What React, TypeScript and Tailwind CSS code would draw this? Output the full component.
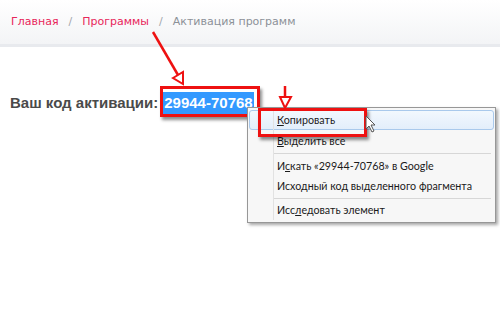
import React from 'react';

const menuFont = { fontFamily: 'Lato, "Liberation Sans", sans-serif' };

function MenuItem({ children, active }: { children: React.ReactNode; active?: boolean }) {
  return (
    <div
      className={
        'h-[20px] flex items-center pl-[27px] text-[10.7px] whitespace-nowrap text-[#1b1b1b] mx-[1px] border ' +
        (active ? 'rounded-[3px] border-[#a9c9ec] bg-gradient-to-b from-[#f2f8fe] to-[#e3eefb]' : 'border-transparent')
      }
    >
      {children}
    </div>
  );
}

function Separator({ gap }: { gap: string }) {
  return (
    <div className={gap}>
      <div className="ml-[25px] mr-[4px] h-px bg-[#d7d7d7]" />
    </div>
  );
}

export default function App() {
  return (
    <div className="relative w-[500px] h-[333px] bg-white overflow-hidden" style={{ fontFamily: '"DejaVu Sans", Verdana, sans-serif' }}>
      {/* breadcrumbs */}
      <div className="h-[47px] bg-gradient-to-b from-white to-[#f3f4f6] border-b-[3px] border-[#e8eaee] flex items-center px-[11px] text-[11px]">
        <span className="text-[#e8265a]">Главная</span>
        <span className="text-[#a3a7ad] mx-[10px]">/</span>
        <span className="text-[#e8265a]">Программы</span>
        <span className="text-[#a3a7ad] mx-[10px]">/</span>
        <span className="text-[#8c9198]">Активация программ</span>
      </div>

      {/* activation code */}
      <div
        className="pt-[45px] pl-[10px] flex items-center text-[15px] font-bold text-[#4a4a4a]"
        style={{ fontFamily: '"Liberation Sans", Arial, sans-serif' }}
      >
        <span>Ваш код активации:</span>
        <span className="ml-[5px] bg-[#3399ff] text-white px-[1px] leading-[22px]">29944-70768</span>
      </div>

      {/* red frame around the code */}
      <div className="absolute left-[160px] top-[86px] w-[100px] h-[31px] border-[3px] border-[#ee1111] shadow-[2px_3px_3px_rgba(0,0,0,0.45)]" />

      {/* context menu */}
      <div
        className="absolute left-[247px] top-[107px] w-[249px] h-[116px] bg-[#f7f7f7] border border-[#979797] shadow-[2px_2px_3px_rgba(0,0,0,0.35)] pt-[2px]"
        style={menuFont}
      >
        <div className="absolute left-[25px] top-[2px] bottom-[2px] w-px bg-[#e2e2e2]" />
        <MenuItem active>
          <span><u>К</u>опировать</span>
        </MenuItem>
        <div className="h-px" />
        <MenuItem>
          <span><u>В</u>ыделить все</span>
        </MenuItem>
        <Separator gap="py-[2px]" />
        <MenuItem>
          <span>И<u>с</u>кать «29944-70768» в Google</span>
        </MenuItem>
        <MenuItem>
          <span>Исходный код выделенного фрагмента</span>
        </MenuItem>
        <Separator gap="pt-[2px] pb-[1px]" />
        <MenuItem>
          <span>Исс<u>л</u>едовать элемент</span>
        </MenuItem>
      </div>

      <div className="absolute left-[258px] top-[108px] w-[109px] h-[29px] border-[3px] border-[#ee1111] shadow-[2px_3px_3px_rgba(0,0,0,0.45)]" />

      {/* arrows and cursor */}
      <svg className="absolute left-0 top-0 pointer-events-none" width="500" height="333" viewBox="0 0 500 333">
        <g stroke="#ee1111" strokeWidth="2.5" fill="none" strokeLinejoin="miter">
          <line x1="153" y1="32" x2="178" y2="75" />
          <polygon points="173,78 183,72 183,84" fill="#fff" strokeWidth="2" />
          <line x1="285" y1="86" x2="285" y2="98" />
          <polygon points="280,97 291,97 285,108" fill="#fff" strokeWidth="2" />
        </g>
        <g transform="translate(366,116)">
          <path d="M0 0 L0 13 L3 10 L6 16 L8 15 L5 9 L9 9 Z" fill="#fff" stroke="#555" strokeWidth="1" />
        </g>
      </svg>
    </div>
  );
}
